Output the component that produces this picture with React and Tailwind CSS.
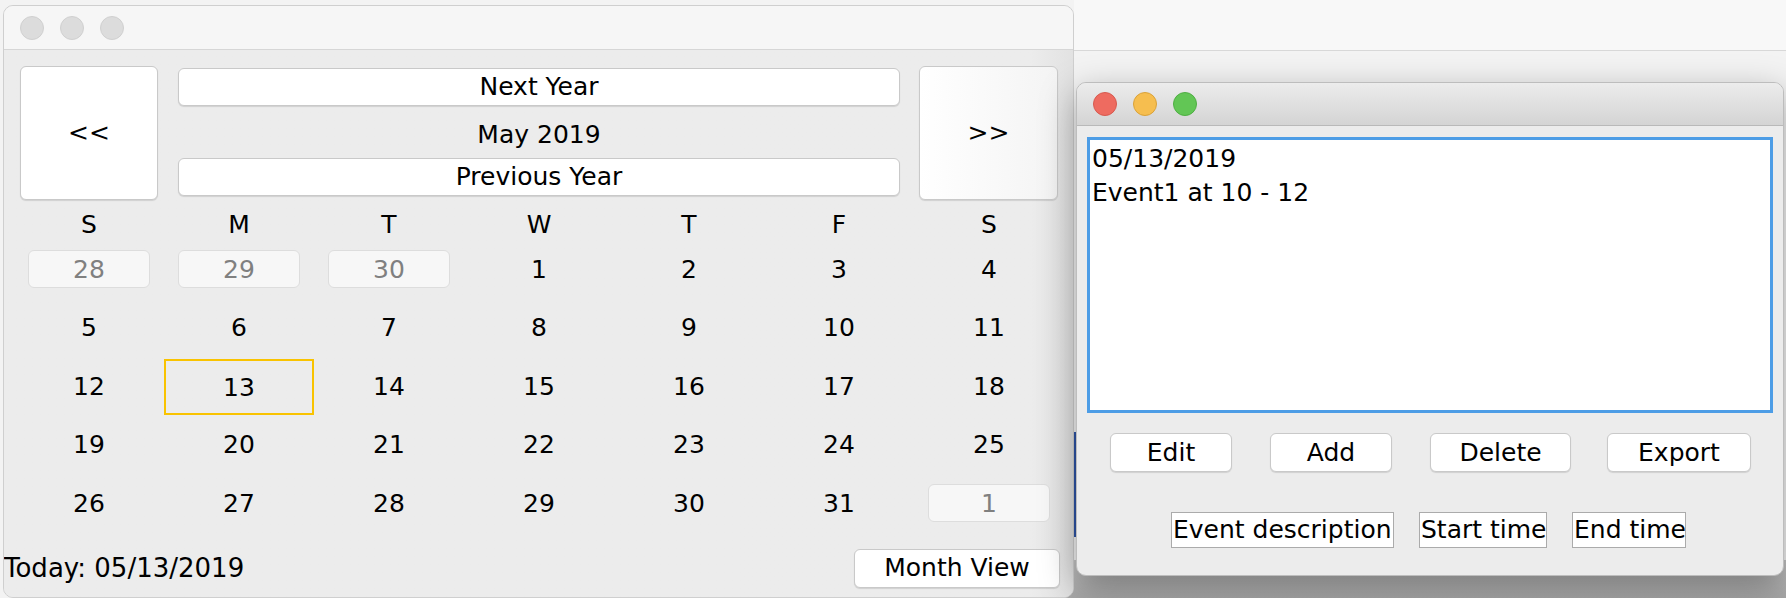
import React from "react";

const FONT = { fontFamily: '"DejaVu Sans", "Liberation Sans", sans-serif' };

function Lights({ active }) {
  const cls = active
    ? [
        "bg-[#ee6b60] border-[#d65a4f]",
        "bg-[#f6be4f] border-[#d9a23a]",
        "bg-[#62c655] border-[#4fae43]",
      ]
    : [
        "bg-[#dcdcdc] border-[#d0d0d0]",
        "bg-[#dcdcdc] border-[#d0d0d0]",
        "bg-[#dcdcdc] border-[#d0d0d0]",
      ];
  return (
    <div className="flex items-center gap-[16px] pl-[16px]">
      {cls.map((c, i) => (
        <div key={i} className={`w-[24px] h-[24px] rounded-full border ${c}`} />
      ))}
    </div>
  );
}

function Btn({ children, className = "" }) {
  return (
    <div
      className={`flex items-center justify-center bg-white border border-[#c9c9c9] rounded-[6px] shadow-[0_1px_1px_rgba(0,0,0,0.12)] text-black ${className}`}
    >
      {children}
    </div>
  );
}

const days = ["S", "M", "T", "W", "T", "F", "S"];
const cells = [
  [28, "p"], [29, "p"], [30, "p"], [1], [2], [3], [4],
  [5], [6], [7], [8], [9], [10], [11],
  [12], [13, "sel"], [14], [15], [16], [17], [18],
  [19], [20], [21], [22], [23], [24], [25],
  [26], [27], [28], [29], [30], [31], [1, "p"],
];

function CalendarWindow() {
  return (
    <div className="absolute left-[3px] top-[5px] w-[1071px] h-[593px] rounded-[10px] overflow-hidden border border-[#cfcfcf] flex flex-col bg-[#ececec]">
      <div className="h-[44px] shrink-0 bg-[#f6f6f6] border-b border-[#d6d6d6] flex items-center">
        <Lights />
      </div>
      <div className="flex-1 flex flex-col text-[25px] bg-gradient-to-r from-[#ececec] from-[96%] to-[#e2e2e2]">
        <div className="flex pt-[16px] pl-[16px] pr-[15px]">
          <Btn className="w-[138px] h-[134px]">&lt;&lt;</Btn>
          <div className="w-[722px] ml-[20px] mr-[19px] flex flex-col pt-[2px]">
            <Btn className="h-[38px]">Next Year</Btn>
            <div className="h-[52px] flex items-center justify-center pt-[6px]">May 2019</div>
            <Btn className="h-[38px]">Previous Year</Btn>
          </div>
          <Btn className="w-[139px] h-[134px] bg-gradient-to-r from-white to-[#f4f4f4]">&gt;&gt;</Btn>
        </div>
        <div className="grid grid-cols-[repeat(7,150px)] pl-[10px]">
          {days.map((d, i) => (
            <div key={i} className="h-[40px] flex justify-center pt-[13px] leading-[24px]">
              {d}
            </div>
          ))}
          {cells.map(([n, t], i) => (
            <div key={i} className="h-[58.5px] flex items-center justify-center">
              {t === "p" ? (
                <div className="w-[122px] h-[38px] flex items-center justify-center bg-[#f7f7f7] border border-[#dddddd] rounded-[6px] text-[#808080]">
                  {n}
                </div>
              ) : t === "sel" ? (
                <div className="w-[150px] h-[56px] mt-[2px] flex items-center justify-center border-2 border-[#f9c300]">
                  {n}
                </div>
              ) : (
                <span>{n}</span>
              )}
            </div>
          ))}
        </div>
        <div className="flex items-center justify-between pt-[16px] pr-[13px]">
          <span className="text-[26px]">Today: 05/13/2019</span>
          <Btn className="w-[206px] h-[39px]">Month View</Btn>
        </div>
      </div>
    </div>
  );
}

function EventWindow() {
  return (
    <div className="absolute left-[1076px] top-[82px] w-[708px] h-[494px] rounded-[10px] overflow-hidden border border-[#bdbdbd] flex flex-col bg-[#ececec] shadow-[0_12px_36px_rgba(0,0,0,0.35)]">
      <div className="h-[43px] shrink-0 bg-gradient-to-b from-[#ececec] to-[#d4d4d4] border-b border-[#b9b9b9] flex items-center">
        <Lights active />
      </div>
      <div className="flex-1 flex flex-col text-[25px] px-[10px] pt-[11px]">
        <div className="h-[276px] bg-white border-[3px] border-[#4d9de6] pl-[2px] pt-[2px] leading-[34px]">
          <div>05/13/2019</div>
          <div>Event1 at 10 - 12</div>
        </div>
        <div className="flex pt-[20px] pl-[23px]">
          <Btn className="w-[122px] h-[39px]">Edit</Btn>
          <Btn className="w-[122px] h-[39px] ml-[38px]">Add</Btn>
          <Btn className="w-[141px] h-[39px] ml-[38px]">Delete</Btn>
          <Btn className="w-[144px] h-[39px] ml-[36px]">Export</Btn>
        </div>
        <div className="flex pt-[40px] pl-[84px] leading-[34px]">
          <div className="w-[223px] h-[36px] bg-white border border-[#ababab] pl-[1px] whitespace-nowrap overflow-hidden">Event description</div>
          <div className="w-[128px] h-[36px] bg-white border border-[#ababab] ml-[25px] pl-[1px] whitespace-nowrap overflow-hidden">Start time</div>
          <div className="w-[114px] h-[36px] bg-white border border-[#ababab] ml-[25px] pl-[1px] whitespace-nowrap overflow-hidden">End time</div>
        </div>
      </div>
    </div>
  );
}

export default function App() {
  return (
    <div className="relative w-[1786px] h-[598px] overflow-hidden bg-[#f3f3f3]" style={FONT}>
      <div className="absolute left-[1074px] top-0 right-0 h-[51px] bg-[#f8f8f8] border-b border-[#d8d8d8]" />
      <div className="absolute left-[1040px] top-[560px] right-0 bottom-0 bg-gradient-to-b from-[#c4c4c4] to-[#a9a9a9]" />
      <div className="absolute left-[1073px] top-[432px] w-[3px] h-[105px] bg-[#2f55a6]" />
      <CalendarWindow />
      <EventWindow />
    </div>
  );
}
